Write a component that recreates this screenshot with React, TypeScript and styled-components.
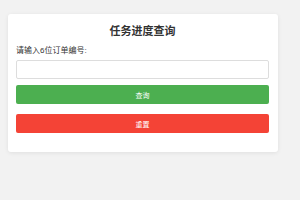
import styled, { createGlobalStyle } from "styled-components";

const GlobalStyle = createGlobalStyle`
  html, body {
    margin: 0;
    padding: 0;
    background: #f2f2f2;
    font-family: "Liberation Sans", "Noto Sans CJK SC", sans-serif;
  }
`;

const Page = styled.div`
  padding: 14px 8px;
`;

const Card = styled.div`
  width: 270px;
  box-sizing: border-box;
  background: #ffffff;
  border-radius: 3px;
  box-shadow: 0 1px 4px rgba(0, 0, 0, 0.08);
  padding: 10px 9px 19px 8px;
`;

const Title = styled.h2`
  margin: 0;
  font-size: 11px;
  line-height: 14px;
  font-weight: 700;
  color: #333;
  text-align: center;
`;

const Label = styled.label`
  display: block;
  margin-top: 8px;
  font-size: 8px;
  line-height: 10px;
  color: #333;
`;

const Input = styled.input`
  display: block;
  box-sizing: border-box;
  width: 100%;
  height: 19px;
  margin-top: 4px;
  border: 1px solid #ddd;
  border-radius: 2px;
  outline: none;
  padding: 0 5px;
  font-size: 8px;
`;

const Button = styled.button<{ $bg: string; $gap: number }>`
  display: block;
  width: 100%;
  height: 19px;
  margin-top: ${(p) => p.$gap}px;
  border: none;
  border-radius: 2px;
  background: ${(p) => p.$bg};
  color: #fff;
  font-family: inherit;
  font-size: 7px;
  cursor: pointer;
`;

export default function App() {
  return (
    <Page>
      <GlobalStyle />
      <Card>
        <Title>任务进度查询</Title>
        <Label>请输入6位订单编号:</Label>
        <Input type="text" />
        <Button $bg="#4caf50" $gap={6}>查询</Button>
        <Button $bg="#f44336" $gap={10}>重置</Button>
      </Card>
    </Page>
  );
}
